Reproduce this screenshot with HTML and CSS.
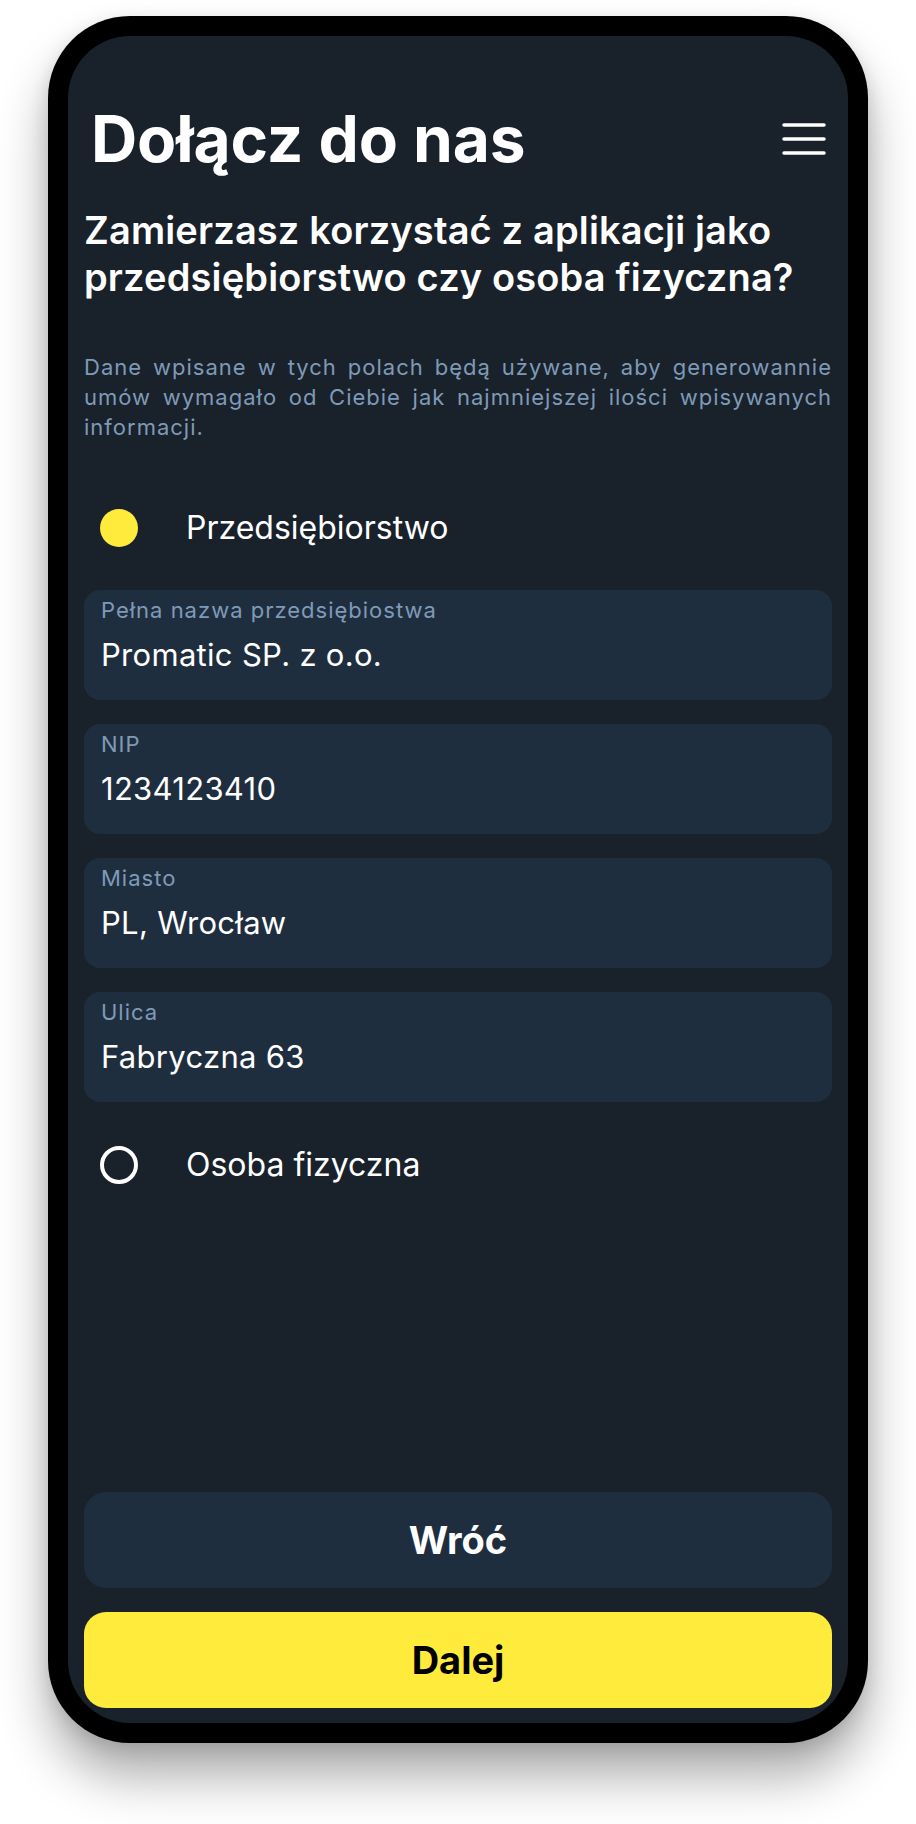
FILE: index.html
```html
<!DOCTYPE html>
<html lang="pl">
<head>
<meta charset="utf-8">
<title>Dołącz do nas</title>
<link rel="stylesheet" href="styles.css">
</head>
<body>
<div class="frame">
  <div class="screen">
    <header class="header">
      <h1 class="title">Dołącz do nas</h1>
      <button class="menu" aria-label="Menu">
        <svg width="44" height="32" viewBox="0 0 44 32">
          <g stroke="#ffffff" stroke-width="3.5" stroke-linecap="round">
            <line x1="2" y1="2" x2="42" y2="2"/>
            <line x1="2" y1="16" x2="42" y2="16"/>
            <line x1="2" y1="30" x2="42" y2="30"/>
          </g>
        </svg>
      </button>
    </header>
    <h2 class="question">Zamierzasz korzystać z aplikacji jako przedsiębiorstwo czy osoba fizyczna?</h2>
    <p class="desc">Dane wpisane w tych polach będą używane, aby generowannie umów wymagało od Ciebie jak najmniejszej ilości wpisywanych informacji.</p>

    <div class="radio-row first">
      <span class="radio checked"></span>
      <span class="radio-label">Przedsiębiorstwo</span>
    </div>

    <div class="fields">
      <div class="field">
        <div class="field-label">Pełna nazwa przedsiębiostwa</div>
        <div class="field-value">Promatic SP. z o.o.</div>
      </div>
      <div class="field">
        <div class="field-label">NIP</div>
        <div class="field-value">1234123410</div>
      </div>
      <div class="field">
        <div class="field-label">Miasto</div>
        <div class="field-value">PL, Wrocław</div>
      </div>
      <div class="field">
        <div class="field-label">Ulica</div>
        <div class="field-value">Fabryczna 63</div>
      </div>
    </div>

    <div class="radio-row second">
      <span class="radio"></span>
      <span class="radio-label">Osoba fizyczna</span>
    </div>

    <div class="spacer"></div>

    <div class="actions">
      <button class="btn btn-back">Wróć</button>
      <button class="btn btn-next">Dalej</button>
    </div>
  </div>
</div>
</body>
</html>
```
FILE: styles.css
```css
* { box-sizing: border-box; }
html, body {
  margin: 0;
  padding: 0;
  background: #ffffff;
}
body {
  width: 916px;
  height: 1824px;
  font-family: Inter, "Noto Sans", "Liberation Sans", sans-serif;
  color: #ffffff;
  padding-top: 16px;
}
.frame {
  width: 820px;
  height: 1727px;
  margin: 0 auto;
  background: #000000;
  border-radius: 82px;
  padding: 20px;
  box-shadow: 0 34px 50px rgba(0, 0, 0, 0.32), 0 6px 18px rgba(0, 0, 0, 0.12);
}
.screen {
  height: 100%;
  background: #19212b;
  border-radius: 62px;
  display: flex;
  flex-direction: column;
  padding: 64px 16px 15px;
}
.header {
  display: flex;
  align-items: center;
  justify-content: space-between;
  padding: 0 6px 0 7px;
}
.title {
  margin: 0;
  font-size: 64px;
  line-height: 78px;
  font-weight: 700;
  letter-spacing: -0.1px;
}
.menu {
  background: none;
  border: 0;
  padding: 0;
  display: flex;
  width: 44px;
  height: 32px;
}
.question {
  margin: 29px 0 0;
  font-size: 38px;
  line-height: 47px;
  font-weight: 600;
  letter-spacing: 0.15px;
}
.desc {
  margin: 51px 0 0;
  font-size: 22px;
  line-height: 30px;
  letter-spacing: 1px;
  color: #7f9ab7;
  text-align: justify;
}
.radio-row {
  display: flex;
  align-items: center;
  gap: 48px;
  padding-left: 16px;
  height: 38px;
}
.radio-row.first { margin-top: 67px; }
.radio-row.second { margin-top: 44px; }
.radio {
  width: 38px;
  height: 38px;
  border-radius: 50%;
  border: 4.5px solid #ffffff;
  flex: none;
}
.radio.checked {
  background: #ffeb3b;
  border: 0;
}
.radio-label {
  font-size: 32px;
  line-height: 38px;
  font-weight: 400;
}
.fields {
  margin-top: 43px;
  display: flex;
  flex-direction: column;
  gap: 24px;
}
.field {
  height: 110px;
  background: #1f2e3f;
  border-radius: 16px;
  padding: 8px 17px;
}
.field-label {
  font-size: 22px;
  line-height: 24px;
  letter-spacing: 1px;
  color: #7f9ab7;
}
.field-value {
  margin-top: 16px;
  font-size: 31px;
  line-height: 34px;
  letter-spacing: 0.3px;
  color: #ffffff;
}
.spacer { flex: 1; }
.actions {
  display: flex;
  flex-direction: column;
  gap: 24px;
}
.btn {
  height: 96px;
  border: 0;
  border-radius: 22px;
  font-family: Inter, "Noto Sans", "Liberation Sans", sans-serif;
  font-size: 38px;
  font-weight: 700;
  display: flex;
  align-items: center;
  justify-content: center;
}
.btn-back {
  background: #1f2e3f;
  color: #ffffff;
}
.btn-next {
  background: #ffeb3b;
  color: #000000;
}
```
